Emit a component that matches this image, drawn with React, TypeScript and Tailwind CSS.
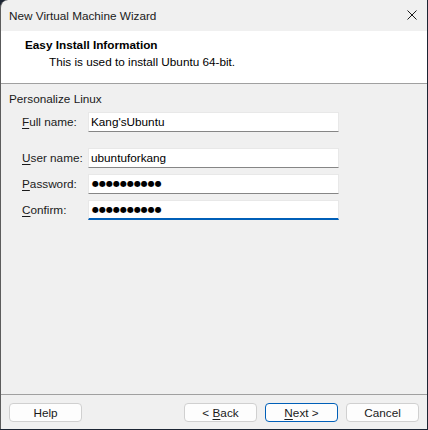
import type { ReactNode } from 'react';

const font = { fontFamily: '"Liberation Sans", Arial, sans-serif' };

function Field({
  label,
  hot,
  value,
  secret,
  focused,
  className = '',
}: {
  label: string;
  hot: string;
  value: string;
  secret?: boolean;
  focused?: boolean;
  className?: string;
}) {
  return (
    <div className={`flex items-center ${className}`}>
      <div className="w-[66px] pl-[21px] box-content text-[11.75px] text-[#1a1a1a]">
        <span className="underline underline-offset-[2px]">{hot}</span>
        {label.slice(hot.length)}
      </div>
      <div
        className={`flex h-[20px] w-[251px] items-center bg-white border border-[#e8e8e8] pl-[2px] ${
          focused ? 'border-b-2 border-b-[#005fb8]' : 'border-b-[#868686]'
        }`}
      >
        {secret ? (
          <span
            className="text-[8px] text-black pl-[1px]"
            style={{ fontFamily: '"DejaVu Sans", sans-serif' }}
          >
            {value}
          </span>
        ) : (
          <span className="text-[11.75px] text-black">{value}</span>
        )}
      </div>
    </div>
  );
}

function Button({
  children,
  primary,
  className = '',
}: {
  children: ReactNode;
  primary?: boolean;
  className?: string;
}) {
  return (
    <button
      className={`h-[19px] w-[73px] rounded-[4px] border bg-[#fdfdfd] text-[11.75px] leading-none text-[#1a1a1a] ${
        primary ? 'border-[#005fb8]' : 'border-[#d0d0d0]'
      } ${className}`}
    >
      {children}
    </button>
  );
}

export default function App() {
  return (
    <div className="w-[428px] h-[430px] bg-[#1c2533]" style={font}>
      <div className="flex flex-col w-[427px] h-[429px] rounded-tl-[8px] overflow-hidden bg-[#f0f0f0] border-l border-[#5c5c5c]">
        {/* title bar */}
        <div className="flex h-[31px] items-center justify-between pl-[8px] pr-[10px]">
          <span className="text-[11.75px] text-[#1a1a1a]">New Virtual Machine Wizard</span>
          <svg width="10" height="10" viewBox="0 0 10 10" className="mt-[-1px]">
            <path d="M0.5 0.5L9.5 9.5M9.5 0.5L0.5 9.5" stroke="#1a1a1a" strokeWidth="1" />
          </svg>
        </div>

        {/* header */}
        <div className="h-[53px] bg-white border-b border-[#a0a0a0] pl-[24px] pt-[6px]">
          <div className="text-[11.75px] font-bold text-black leading-[16px]">Easy Install Information</div>
          <div className="text-[11.75px] text-black leading-[16px] pl-[24px] mt-[1px]">
            This is used to install Ubuntu 64-bit.
          </div>
        </div>

        {/* body */}
        <div className="flex-1 pt-[7px]">
          <div className="pl-[8px] text-[11.75px] leading-[16px] text-[#1a1a1a]">Personalize Linux</div>
          <Field className="mt-[5px]" label="Full name:" hot="F" value="Kang'sUbuntu" />
          <Field className="mt-[16px]" label="User name:" hot="U" value="ubuntuforkang" />
          <Field className="mt-[6px]" label="Password:" hot="P" value="●●●●●●●●●●" secret />
          <Field className="mt-[6px]" label="Confirm:" hot="C" value="●●●●●●●●●●" secret focused />
        </div>

        {/* footer */}
        <div className="h-[35px] border-t border-[#a0a0a0] flex items-start pt-[8px] px-[8px]">
          <Button>Help</Button>
          <div className="flex-1" />
          <Button>
            &lt; <span className="underline underline-offset-[2px]">B</span>ack
          </Button>
          <Button primary className="ml-[8px]">
            <span className="underline underline-offset-[2px]">N</span>ext &gt;
          </Button>
          <Button className="ml-[8px]">Cancel</Button>
        </div>
      </div>
    </div>
  );
}
